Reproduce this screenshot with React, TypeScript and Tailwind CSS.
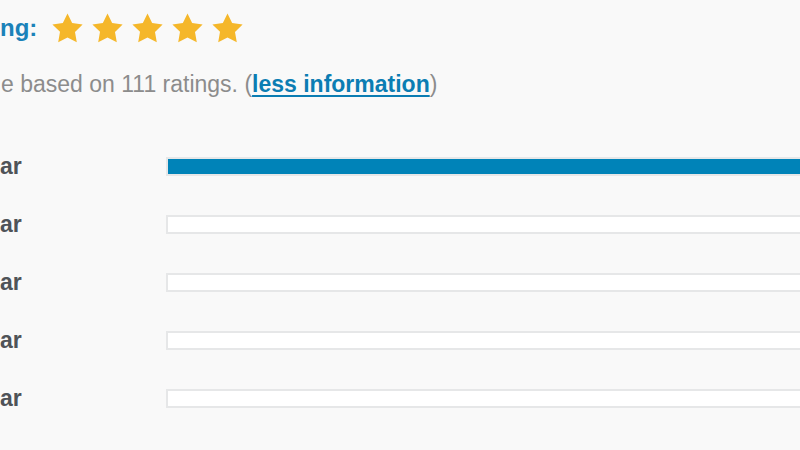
import React from "react";

const Star = () => (
  <svg width="31" height="30" viewBox="0 0 24 23" className="shrink-0">
    <path
      d="M12 .3l3.6 7.3 8.1 1.2-5.9 5.7 1.4 8.1L12 18.8l-7.2 3.8 1.4-8.1L.3 8.8l8.1-1.2z"
      fill="#f5b72a"
    />
  </svg>
);

const rows = [100, 0, 0, 0, 0];

export default function App() {
  return (
    <div className="w-[800px] h-[450px] overflow-hidden bg-[#f9f9f9] font-['Liberation_Sans',Arial,sans-serif]">
      <div className="flex items-center h-[56px]">
        <span className="text-[24px] font-bold text-[#1b82b9] leading-none">ng:</span>
        <div className="flex items-center gap-[9px] ml-[15px] mt-[-1px]">
          <Star />
          <Star />
          <Star />
          <Star />
          <Star />
        </div>
      </div>
      <div className="flex items-center h-[56px] text-[23px] text-[#8c8c8c] leading-none">
        <span className="ml-[1px]">
          e based on 111 ratings. (
          <a className="font-bold text-[#0b7db3] underline underline-offset-[3px] decoration-[2px]">less information</a>)
        </span>
      </div>
      <div className="h-[25px]" />
      {rows.map((p, i) => (
        <div key={i} className="grid grid-cols-[166px_1fr] items-center h-[58px] mr-[-20px]">
          <span className="text-[23px] font-bold text-[#4f5358] leading-none">ar</span>
          <div className="h-[19px] border-[2px] border-[#e6e7e8] bg-white">
            <div className="h-full bg-[#0083b8]" style={{ width: `${p}%` }} />
          </div>
        </div>
      ))}
    </div>
  );
}
